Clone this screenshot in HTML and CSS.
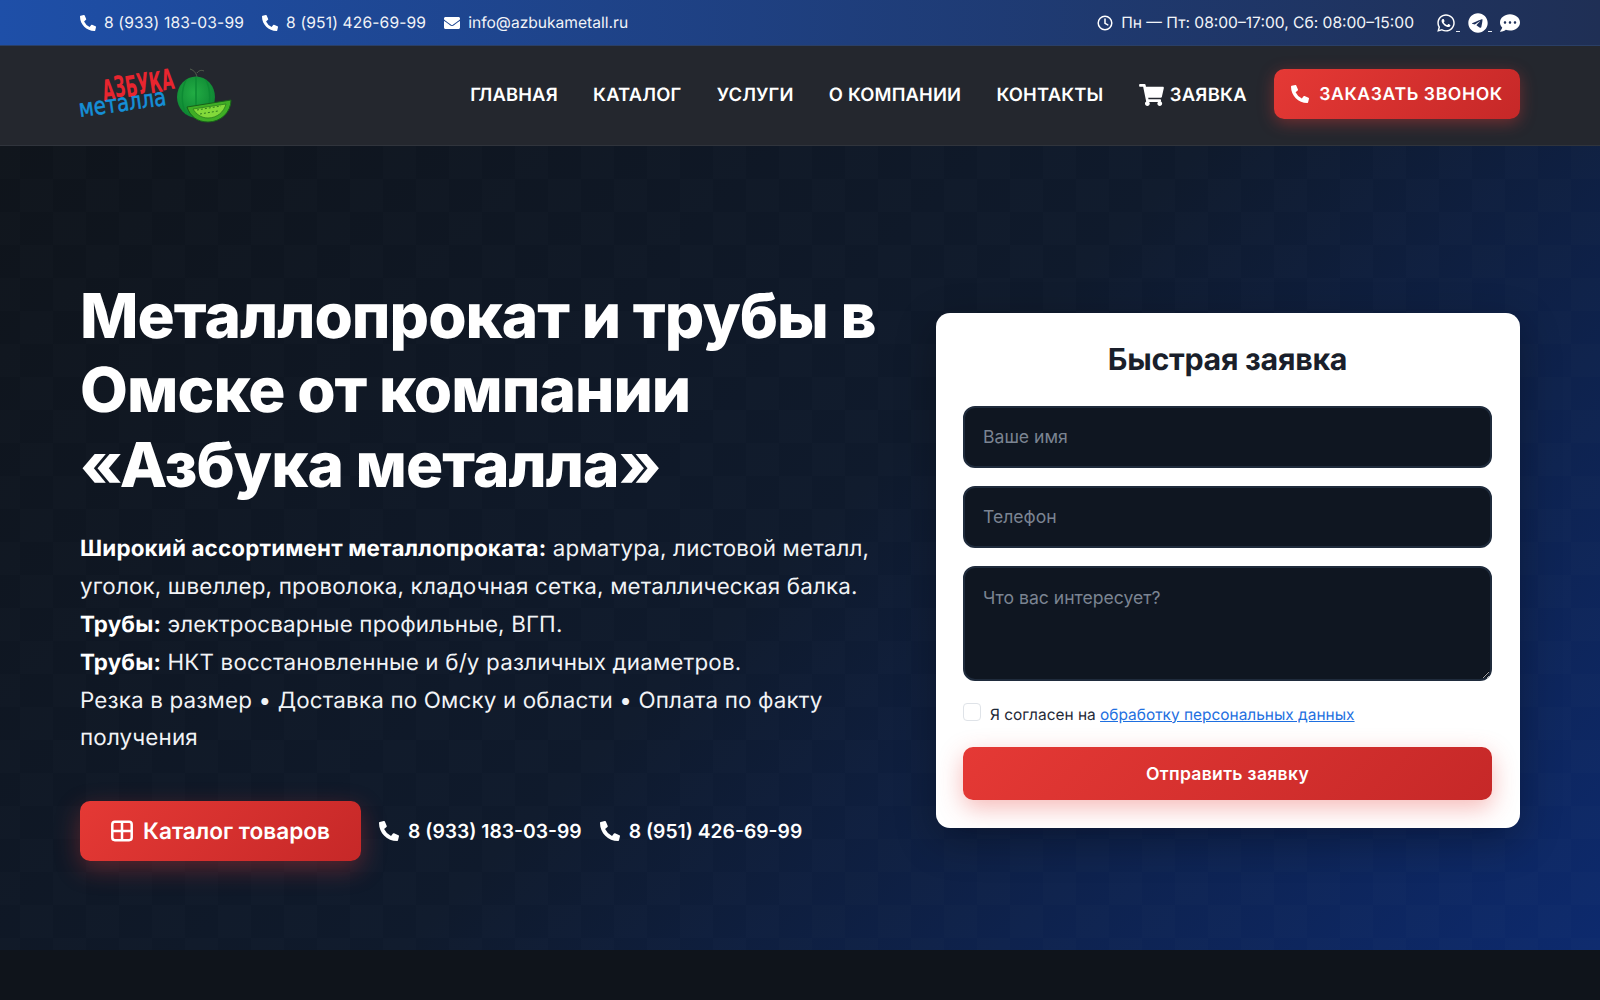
FILE: index.html
```html
<!DOCTYPE html>
<html lang="ru">
<head>
    <meta charset="UTF-8">
    <meta name="viewport" content="width=device-width, initial-scale=1.0">
    <title>Азбука металла - Металлопрокат и трубы в Омске</title>
    <link rel="stylesheet" href="styles.css">
</head>
<body>
    <svg class="sprite" aria-hidden="true">
        <symbol id="i-phone" viewBox="0 0 512 512"><path d="M497.39 361.8l-112-48a24 24 0 0 0-28 6.9l-49.6 60.6A370.66 370.66 0 0 1 130.6 204.11l60.6-49.6a23.94 23.94 0 0 0 6.9-28l-48-112A24.16 24.16 0 0 0 122.6.61l-104 24A24 24 0 0 0 0 48c0 256.5 207.9 464 464 464a24 24 0 0 0 23.4-18.6l24-104a24.29 24.29 0 0 0-14.01-27.6z"/></symbol>
        <symbol id="i-mail" viewBox="0 0 512 512"><path d="M502.3 190.8c3.9-3.1 9.7-.2 9.7 4.7V400c0 26.5-21.5 48-48 48H48c-26.5 0-48-21.5-48-48V195.6c0-5 5.7-7.8 9.7-4.7 22.4 17.4 52.1 39.5 154.1 113.6 21.1 15.4 56.7 47.8 92.2 47.6 35.7.3 72-32.8 92.3-47.6 102-74.1 131.6-96.3 154-113.7zM256 320c23.2.4 56.6-29.2 73.4-41.4 132.7-96.3 142.8-104.7 173.4-128.7 5.8-4.5 9.2-11.5 9.2-18.9v-19c0-26.5-21.5-48-48-48H48C21.5 64 0 85.5 0 112v19c0 7.4 3.4 14.3 9.2 18.9 30.6 23.9 40.7 32.4 173.4 128.7 16.8 12.2 50.2 41.8 73.4 41.4z"/></symbol>
        <symbol id="i-cart" viewBox="0 0 576 512"><path d="M528.12 301.319l47.273-208C578.806 78.301 567.391 64 551.99 64H159.208l-9.166-44.81C147.758 8.021 137.93 0 126.529 0H24C10.745 0 0 10.745 0 24v16c0 13.255 10.745 24 24 24h69.883l70.248 343.435C147.325 417.1 136 435.222 136 456c0 30.928 25.072 56 56 56s56-25.072 56-56c0-15.674-6.447-29.835-16.824-40h209.647C430.447 426.165 424 440.326 424 456c0 30.928 25.072 56 56 56s56-25.072 56-56c0-22.172-12.888-41.332-31.579-50.405l5.517-24.276c3.413-15.018-8.002-29.319-23.403-29.319H218.117l-6.545-32h293.145c11.206 0 20.92-7.754 23.403-18.681z"/></symbol>
    </svg>

    <div class="topbar">
        <div class="wrap topbar-row">
            <div class="top-group">
                <a class="top-item tel" href="#"><svg class="ic"><use href="#i-phone"/></svg>8 (933) 183-03-99</a>
                <a class="top-item tel" href="#"><svg class="ic"><use href="#i-phone"/></svg>8 (951) 426-69-99</a>
                <a class="top-item" href="#"><svg class="ic"><use href="#i-mail"/></svg>info@azbukametall.ru</a>
            </div>
            <div class="top-group top-right">
                <span class="top-item">
                    <svg class="ic-clock" viewBox="0 0 16 16"><circle cx="8" cy="8" r="6.8"/><path d="M8 4v4.3l2.8 1.6"/></svg>
                    Пн — Пт: 08:00–17:00, Сб: 08:00–15:00
                </span>
                <div class="socials">
                    <a class="social" href="#"><svg class="soc" viewBox="0 0 448 512"><path d="M380.9 97.1C339 55.1 283.2 32 223.9 32c-122.4 0-222 99.6-222 222 0 39.1 10.2 77.3 29.6 111L0 480l117.7-30.9c32.4 17.7 68.9 27 106.1 27h.1c122.3 0 224.1-99.6 224.1-222 0-59.3-25.2-115-67.1-157zm-157 341.6c-33.2 0-65.7-8.9-94-25.7l-6.7-4-69.8 18.3L72 359.2l-4.4-7c-18.5-29.4-28.2-63.3-28.2-98.2 0-101.7 82.8-184.5 184.6-184.5 49.3 0 95.6 19.2 130.4 54.1 34.8 34.9 56.2 81.2 56.1 130.5 0 101.8-84.9 184.6-186.6 184.6zm101.2-138.2c-5.5-2.8-32.8-16.2-37.9-18-5.1-1.9-8.8-2.8-12.5 2.8-3.7 5.6-14.3 18-17.6 21.8-3.2 3.7-6.5 4.2-12 1.4-32.6-16.3-54-29.1-75.5-66-5.7-9.8 5.7-9.1 16.3-30.3 1.8-3.7.9-6.9-.5-9.7-1.4-2.8-12.5-30.1-17.1-41.2-4.5-10.8-9.1-9.3-12.5-9.5-3.2-.2-6.9-.2-10.6-.2-3.7 0-9.7 1.4-14.8 6.9-5.1 5.6-19.4 19-19.4 46.3 0 27.3 19.9 53.7 22.6 57.4 2.8 3.7 39.1 59.7 94.8 83.8 35.2 15.2 49 16.5 66.6 13.9 10.7-1.6 32.8-13.4 37.4-26.4 4.6-13 4.6-24.1 3.2-26.4-1.3-2.5-5-3.9-10.5-6.6z"/></svg><span class="dash"></span></a>
                    <a class="social" href="#"><svg class="soc" viewBox="0 0 496 512"><path d="M248,8C111.033,8,0,119.033,0,256S111.033,504,248,504,496,392.967,496,256,384.967,8,248,8ZM362.952,176.66c-3.732,39.215-19.881,134.378-28.1,178.3-3.476,18.584-10.322,24.816-16.948,25.425-14.4,1.326-25.338-9.517-39.287-18.661-21.827-14.308-34.158-23.215-55.346-37.177-24.485-16.135-8.612-25,5.342-39.5,3.652-3.793,67.107-61.51,68.335-66.746.153-.655.3-3.1-1.154-4.384s-3.59-.849-5.135-.5q-3.283.746-104.608,69.142-14.845,10.194-26.894,9.934c-8.855-.191-25.888-5.006-38.551-9.123-15.531-5.048-27.875-7.717-26.8-16.291q.84-6.7,18.45-13.7,108.446-47.248,144.628-62.3c68.872-28.647,83.183-33.623,92.511-33.789,2.052-.034,6.639.474,9.61,2.885a10.452,10.452,0,0,1,3.53,6.716A43.765,43.765,0,0,1,362.952,176.66Z"/></svg><span class="dash"></span></a>
                    <a class="social" href="#"><svg class="soc" viewBox="0 0 512 512"><path d="M256 32C114.6 32 0 125.1 0 240c0 49.6 21.4 95 57 130.7C44.5 421.1 2.7 466 2.2 466.5c-2.2 2.3-2.8 5.7-1.5 8.7S4.8 480 8 480c66.3 0 116-31.8 140.6-51.4 32.7 12.3 69 19.4 107.4 19.4 141.4 0 256-93.1 256-208S397.4 32 256 32zM128 272c-17.7 0-32-14.3-32-32s14.3-32 32-32 32 14.3 32 32-14.3 32-32 32zm128 0c-17.7 0-32-14.3-32-32s14.3-32 32-32 32 14.3 32 32-14.3 32-32 32zm128 0c-17.7 0-32-14.3-32-32s14.3-32 32-32 32 14.3 32 32-14.3 32-32 32z"/></svg></a>
                </div>
            </div>
        </div>
    </div>

    <header class="navbar">
        <div class="wrap nav-row">
            <a class="logo" href="#">
                <svg width="152" height="60" viewBox="0 0 152 60">
                    <defs>
                        <radialGradient id="melon" cx="45%" cy="40%" r="65%">
                            <stop offset="0" stop-color="#22ad44"/>
                            <stop offset="1" stop-color="#0c8231"/>
                        </radialGradient>
                    </defs>
                    <text class="logo-red" transform="translate(24 34) rotate(-9) scale(.54 1)">А<tspan dy="-2">З</tspan><tspan dy="2">Б</tspan><tspan dy="-1">У</tspan><tspan dy="1">К</tspan><tspan dy="-1">А</tspan></text>
                    <text class="logo-blue" transform="translate(0 50) rotate(-8) scale(.82 1)">металла</text>
                    <path d="M110 2c3 1 6 3 7 8M117 6c2-3 5-3 7-2" class="melon-stem"/>
                    <ellipse cx="116" cy="30" rx="19" ry="20.5" fill="url(#melon)"/>
                    <path d="M106 13c-5 10-5 24 0 34M116 10v40M126 13c5 10 5 24 0 34" class="melon-stripes"/>
                    <path d="M107 40l44-7c0 12-10 22-23 22-11 0-18-6-21-15z" class="slice-rim"/>
                    <path d="M113 42l33-5c-2 8-9 14-18 14-7 0-12-4-15-9z" class="slice-flesh"/>
                    <path d="M117 43l24-4M120 47l18-3" class="slice-seeds"/>
                </svg>
            </a>
            <nav class="nav-links">
                <a href="#">ГЛАВНАЯ</a>
                <a href="#">КАТАЛОГ</a>
                <a href="#">УСЛУГИ</a>
                <a href="#">О КОМПАНИИ</a>
                <a href="#">КОНТАКТЫ</a>
                <a class="nav-cart" href="#"><svg class="ic-cart"><use href="#i-cart"/></svg>ЗАЯВКА</a>
            </nav>
            <a class="btn-call" href="#"><svg class="ic-call"><use href="#i-phone"/></svg>ЗАКАЗАТЬ ЗВОНОК</a>
        </div>
    </header>

    <section class="hero">
        <div class="wrap hero-grid">
            <div class="hero-text">
                <h1>Металлопрокат и трубы в Омске от компании «Азбука металла»</h1>
                <p class="lead">
                    <strong>Широкий ассортимент металлопроката:</strong> арматура, листовой металл, уголок, швеллер, проволока, кладочная сетка, металлическая балка.<br>
                    <strong>Трубы:</strong> электросварные профильные, ВГП.<br>
                    <strong>Трубы:</strong> НКТ восстановленные и б/у различных диаметров.<br>
                    Резка в размер • Доставка по Омску и области • Оплата по факту получения
                </p>
                <div class="hero-actions">
                    <a class="btn-catalog" href="#">
                        <svg class="ic-grid" viewBox="0 0 22 22"><rect x="1.3" y="1.8" width="19.4" height="18.4" rx="2.6"/><path d="M1.3 11h19.4M11 1.8v18.4"/></svg>
                        Каталог товаров
                    </a>
                    <a class="hero-phone" href="#"><svg class="ic-hero"><use href="#i-phone"/></svg>8 (933) 183-03-99</a>
                    <a class="hero-phone" href="#"><svg class="ic-hero"><use href="#i-phone"/></svg>8 (951) 426-69-99</a>
                </div>
            </div>

            <form class="quick-form">
                <h2>Быстрая заявка</h2>
                <input class="field" type="text" placeholder="Ваше имя">
                <input class="field" type="text" placeholder="Телефон">
                <textarea class="field field-area" placeholder="Что вас интересует?"></textarea>
                <label class="agree">
                    <span class="check"></span>
                    <span class="agree-text">Я согласен на <a href="#">обработку персональных данных</a></span>
                </label>
                <button class="btn-send" type="button">Отправить заявку</button>
            </form>
        </div>
    </section>

    <div class="next-section"></div>
</body>
</html>
```

FILE: styles.css
```css
* {
    box-sizing: border-box;
}

html,
body {
    margin: 0;
    padding: 0;
}

body {
    font-family: Inter, "Noto Sans", sans-serif;
    text-rendering: geometricPrecision;
    background: #0f141b;
    color: #fff;
    height: 1000px;
    overflow: hidden;
}

a {
    color: inherit;
    text-decoration: none;
}

.sprite {
    display: none;
}

.wrap {
    width: 1440px;
    margin: 0 auto;
}

/* top line */
.topbar {
    height: 46px;
    background: linear-gradient(90deg, #1e4fa8 0%, #1f2f55 100%);
    border-bottom: 1px solid #2a3f66;
}

.topbar-row {
    height: 45px;
    display: flex;
    justify-content: space-between;
    align-items: center;
}

.top-group {
    display: flex;
    align-items: center;
    gap: 18px;
}

.top-right {
    gap: 22px;
}

.top-item {
    display: flex;
    align-items: center;
    gap: 8px;
    font-size: 15.6px;
    color: #f2f4f8;
}

.tel {
    letter-spacing: .15px;
}

.ic {
    width: 16px;
    height: 16px;
    fill: #fff;
}

.ic-clock {
    width: 16px;
    height: 16px;
    fill: none;
    stroke: #fff;
    stroke-width: 1.5;
    stroke-linecap: round;
}

.socials {
    display: flex;
    align-items: center;
    gap: 8px;
}

.social {
    display: flex;
    align-items: flex-end;
}

.soc {
    width: 20px;
    height: 20px;
    fill: #fff;
}

.dash {
    width: 4px;
    height: 1px;
    background: #e6eaf2;
    margin-bottom: 1px;
}

/* nav */
.navbar {
    height: 100px;
    background: #24272e;
    border-bottom: 1px solid #30343c;
}

.nav-row {
    height: 99px;
    display: flex;
    align-items: center;
}

.logo {
    display: flex;
    margin-top: 2px;
}

.logo svg {
    overflow: visible;
}

.logo-red {
    font-family: "DejaVu Sans", sans-serif;
    font-size: 29px;
    font-weight: 700;
    fill: #e8252f;
}

.logo-blue {
    font-family: "DejaVu Sans", sans-serif;
    font-size: 24px;
    font-weight: 400;
    fill: #1590d8;
    stroke: #1590d8;
    stroke-width: .6;
}

.melon-stem {
    fill: none;
    stroke: #55604f;
    stroke-width: 1;
}

.melon-stripes {
    fill: none;
    stroke: #0d8a33;
    stroke-width: 1.5;
}

.slice-rim {
    fill: #3fae25;
    stroke: #17611a;
    stroke-width: 1;
}

.slice-flesh {
    fill: #82d93a;
    stroke: #2c7d20;
    stroke-width: .8;
}

.slice-seeds {
    fill: none;
    stroke: #2c7d20;
    stroke-width: 1;
    stroke-dasharray: 2 2;
}

.nav-links {
    margin-left: auto;
    margin-top: -2px;
    display: flex;
    align-items: center;
    gap: 35.3px;
    font-size: 18.4px;
    font-weight: 600;
    letter-spacing: .15px;
}

.nav-cart {
    display: flex;
    align-items: center;
    gap: 6px;
    letter-spacing: .3px;
}

.ic-cart {
    width: 25px;
    height: 22px;
    fill: #fff;
}

.btn-call {
    margin-left: 27px;
    width: 246px;
    height: 50px;
    margin-top: -3px;
    display: flex;
    align-items: center;
    justify-content: center;
    gap: 10px;
    border-radius: 10px;
    font-size: 17.6px;
    font-weight: 600;
    letter-spacing: .6px;
    background: linear-gradient(135deg, #e53935, #c62828);
    box-shadow: 0 4px 16px rgba(229, 57, 53, .4);
}

.ic-call {
    width: 18px;
    height: 18px;
    fill: #fff;
}

/* hero */
.hero {
    height: 804px;
    padding-top: 44px;
    background:
        repeating-conic-gradient(rgba(255, 255, 255, .007) 0 25%, transparent 0 50%) 20px 0 / 66px 66px,
        linear-gradient(135deg, #0f141b 0%, #0f1a2c 50%, #0d2a6e 100%);
}

.hero-grid {
    height: 100%;
    display: grid;
    grid-template-columns: 1fr 584px;
    gap: 56px;
    align-items: center;
}

h1 {
    margin: 0 0 28px;
    font-size: 62px;
    line-height: 74.5px;
    font-weight: 800;
    letter-spacing: -.95px;
    color: #fff;
}

.lead {
    margin: 0 0 44px;
    font-size: 22.4px;
    line-height: 37.8px;
    letter-spacing: .16px;
    color: #f1f3f6;
}

.lead strong {
    font-weight: 700;
    color: #fff;
}

.hero-actions {
    display: flex;
    align-items: center;
    gap: 18px;
}

.btn-catalog {
    width: 281px;
    height: 60px;
    display: flex;
    align-items: center;
    justify-content: center;
    gap: 10px;
    border-radius: 10px;
    font-size: 22.6px;
    font-weight: 600;
    background: linear-gradient(135deg, #e53935, #c62828);
    box-shadow: 0 8px 24px rgba(229, 57, 53, .35);
}

.ic-grid {
    width: 22px;
    height: 22px;
    fill: none;
    stroke: #fff;
    stroke-width: 2.5;
}

.hero-phone {
    display: flex;
    align-items: center;
    gap: 9px;
    font-size: 19.3px;
    font-weight: 600;
}

.ic-hero {
    width: 20px;
    height: 20px;
    fill: #fff;
}

/* form */
.quick-form {
    height: 515px;
    padding: 29px 28px 27px 27px;
    background: #fff;
    border-radius: 14px;
    box-shadow: 0 12px 40px rgba(0, 0, 0, .3);
    display: flex;
    flex-direction: column;
}

.quick-form h2 {
    margin: 0 0 27px;
    text-align: center;
    font-size: 30.4px;
    line-height: 37px;
    font-weight: 700;
    letter-spacing: -.3px;
    color: #1a1f2b;
}

.field {
    display: block;
    width: 100%;
    height: 62px;
    margin-bottom: 18px;
    padding: 0 18px;
    background: #0f1621;
    border: 2px solid #1f2b3c;
    border-radius: 12px;
    font-family: inherit;
    font-size: 17.6px;
    color: #fff;
    outline: none;
}

.field::placeholder {
    color: #7b8492;
    opacity: 1;
}

.field-area {
    height: 115px;
    padding: 18px;
    line-height: 24px;
    margin-bottom: 22px;
    resize: vertical;
}

.agree {
    display: flex;
    align-items: center;
    gap: 9px;
    height: 18px;
    margin-bottom: 26px;
    font-size: 15.45px;
    color: #1f2937;
}

.agree-text {
    margin-top: 5px;
}

.check {
    width: 18px;
    height: 18px;
    border: 1px solid #dfe3e8;
    border-radius: 4px;
    background: #fff;
}

.agree a {
    color: #1e6fe0;
    text-decoration: underline;
}

.btn-send {
    height: 53px;
    border: none;
    border-radius: 10px;
    font-family: inherit;
    font-size: 17.6px;
    font-weight: 600;
    letter-spacing: .3px;
    color: #fff;
    background: linear-gradient(135deg, #e53935, #c62828);
    box-shadow: 0 8px 24px rgba(229, 57, 53, .35);
}

.next-section {
    height: 50px;
    background: #0f141b;
}
```
